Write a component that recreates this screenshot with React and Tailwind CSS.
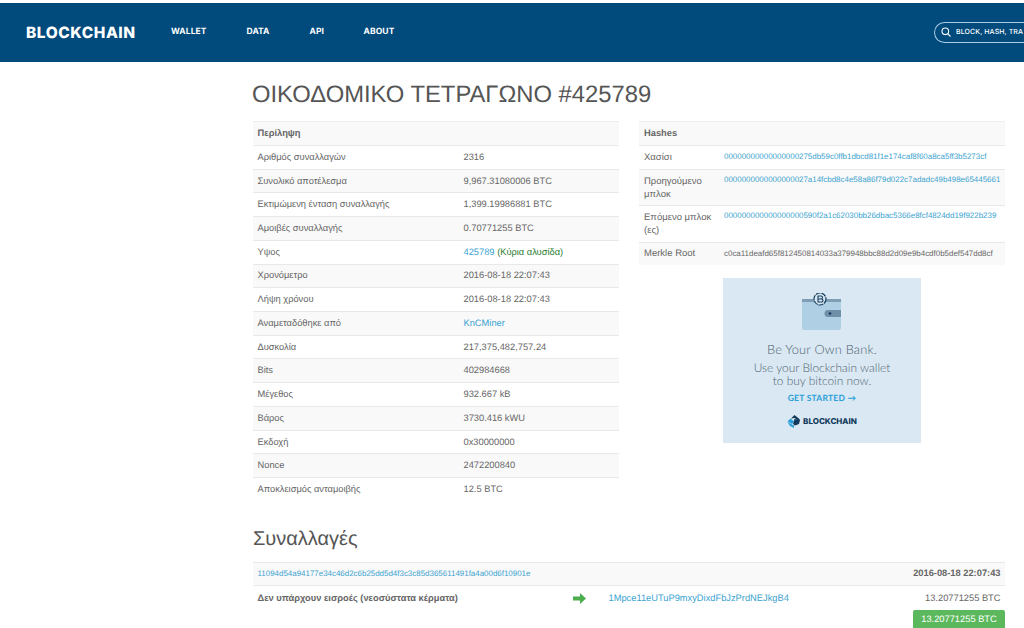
const rows = [
  ["Αριθμός συναλλαγών", "2316"],
  ["Συνολικό αποτέλεσμα", "9,967.31080006 BTC"],
  ["Εκτιμώμενη ένταση συναλλαγής", "1,399.19986881 BTC"],
  ["Αμοιβές συναλλαγής", "0.70771255 BTC"],
  ["Υψος", <><a className="text-[#3ba3d0]">425789</a> <span className="text-[#2d7d32]">(Κύρια αλυσίδα)</span></>],
  ["Χρονόμετρο", "2016-08-18 22:07:43"],
  ["Λήψη χρόνου", "2016-08-18 22:07:43"],
  ["Αναμεταδόθηκε από", <a className="text-[#3ba3d0]">KnCMiner</a>],
  ["Δυσκολία", "217,375,482,757.24"],
  ["Bits", "402984668"],
  ["Μέγεθος", "932.667 kB"],
  ["Βάρος", "3730.416 kWU"],
  ["Εκδοχή", "0x30000000"],
  ["Nonce", "2472200840"],
  ["Αποκλεισμός ανταμοιβής", "12.5 BTC"],
];

const hashes = [
  ["Χασίσι", "00000000000000000275db59c0ffb1dbcd81f1e174caf8f60a8ca5ff3b5273cf", true, false],
  ["Προηγούμενο μπλοκ", "0000000000000000027a14fcbd8c4e58a86f79d022c7adadc49b498e65445661", true, true],
  ["Επόμενο μπλοκ (ες)", "000000000000000000590f2a1c62030bb26dbac5366e8fcf4824dd19f922b239", true, true],
  ["Merkle Root", "c0ca11deafd65f812450814033a379948bbc88d2d09e9b4cdf0b5def547dd8cf", false, false],
];

function Wallet() {
  return (
    <svg width="44" height="38" viewBox="0 0 44 38">
      <rect x="2" y="6" width="39" height="31" rx="2" fill="#afcfe4" />
      <rect x="2" y="6" width="39" height="3" fill="#7f9db5" />
      <path d="M28 17h13v7H28a3.500 3.500 0 0 1 0-7z" fill="#6f8ea8" />
      <circle cx="30" cy="20.500" r="1.300" fill="#123a5c" />
      <circle cx="20" cy="6" r="6" fill="#d8e8f2" stroke="#123a5c" strokeWidth="1.200" strokeDasharray="5 0.800" />
      <path d="M18 3h3a1.500 1.500 0 0 1 0 3h-3zm0 3h3.500a1.500 1.500 0 0 1 0 3H18z" fill="none" stroke="#123a5c" strokeWidth="1.100" />
    </svg>
  );
}

function Logo() {
  return (
    <svg width="14" height="13" viewBox="0 0 14 13">
      <path d="M7.500 0L13 4.500 11 5.500 7.500 3 4 3.500z" fill="#123a5c" />
      <path d="M3.500 3.500L7 6.500 5 9 .500 6.500z" fill="#2a9fd8" />
      <path d="M7.500 4l5.500 1-1 4-4 1.500-2-1.500z" fill="#123a5c" />
      <path d="M.500 7L5 9.500l2 1V13L3 11z" fill="#2a9fd8" />
    </svg>
  );
}

export default function App() {
  return (
    <div className="h-[628px] w-[1024px] overflow-hidden bg-white font-['Liberation_Sans',Arial,sans-serif] text-[#666] [text-rendering:geometricPrecision]">
      <header className="mt-[2.500px] flex h-[59.500px] items-center bg-[#004a7c] pl-[26px]">
        <div className="w-[145px] font-['Inter',sans-serif] text-[15.500px] font-extrabold tracking-[0.55px] text-white">BLOCKCHAIN</div>
        <nav className="flex font-['Inter',sans-serif] text-[8.500px] font-bold tracking-[0.1px] text-white">
          <span className="w-[75.500px]">WALLET</span>
          <span className="w-[63px]">DATA</span>
          <span className="w-[54px]">API</span>
          <span>ABOUT</span>
        </nav>
        <div className="ml-auto flex h-[21px] w-[90px] items-center self-center rounded-l-full border border-r-0 border-[#a8cce4] pl-[6px] font-['Inter',sans-serif] text-[7px] font-medium tracking-[0.1px] whitespace-nowrap text-white">
          <svg width="10" height="10" viewBox="0 0 10 10" fill="none" stroke="#ffffff" strokeWidth="1.100" className="mr-[5px] shrink-0">
            <circle cx="4.300" cy="4.300" r="3.300" />
            <path d="M6.800 6.800L9.500 9.500" />
          </svg>
          BLOCK, HASH, TRA
        </div>
      </header>

      <main className="ml-[253px] w-[752px]">
        <h1 className="mt-[18px] -ml-[1px] h-[41px] text-[23.800px] leading-[29px] font-normal text-[#555] whitespace-nowrap">ΟΙΚΟΔΟΜΙΚΟ ΤΕΤΡΑΓΩΝΟ #425789</h1>

        <div className="flex h-[381px] justify-between">
          <section className="w-[366px] text-[9.300px]">
            <div className="flex h-[24px] items-center border-t border-[#eeeeee] bg-[#f9f9f9] pl-[4.500px] font-bold">Περίληψη</div>
            {rows.map(([k, v], i) => (
              <div key={k} className={`flex h-[23.720px] items-center border-t border-[#e8e8e8] pt-[1px] pl-[4.500px] ${i % 2 === 1 ? "bg-[#f9f9f9]" : "bg-white"}`}>
                <div className="w-[206px]">{k}</div>
                <div>{v}</div>
              </div>
            ))}
          </section>

          <section className="w-[366px]">
            <div className="flex h-[24px] items-center border-t border-[#eeeeee] bg-[#f9f9f9] pl-[5px] text-[9.300px] font-bold">Hashes</div>
            {hashes.map(([k, v, link, tall], i) => (
              <div key={k} className={`flex border-t border-[#e8e8e8] pl-[5px] ${tall ? "h-[36.500px] pt-[5px]" : "h-[23.500px] items-center"} ${i % 2 === 1 ? "bg-[#f9f9f9]" : ""}`}>
                <div className="w-[80px] shrink-0 pr-[6px] text-[9.500px] leading-[13px]">{k}</div>
                <div className={`text-[7.950px] leading-[10px] whitespace-nowrap ${link ? "text-[#3ba3d0]" : "text-[#666]"}`}>{v}</div>
              </div>
            ))}
            <div className="mt-[13px] ml-[84px] flex h-[165px] w-[198px] flex-col items-center bg-[#d9e8f2] font-['Lato',sans-serif] text-[#4f6473]">
              <div className="mt-[15px] h-[40px]"><Wallet /></div>
              <div className="mt-[8px] text-[12.800px] leading-[16px] font-light tracking-[0.2px]">Be Your Own Bank.</div>
              <div className="mt-[4px] text-center text-[11.900px] leading-[13px] font-light">Use your Blockchain wallet<br />to buy bitcoin now.</div>
              <div className="mt-[5px] text-[8.500px] font-bold tracking-[0.25px] text-[#2a9fd8]">GET STARTED →</div>
              <div className="mt-[10px] flex items-center gap-[2px] font-['Inter',sans-serif] text-[8px] font-extrabold text-[#123a5c]"><Logo />BLOCKCHAIN</div>
            </div>
          </section>
        </div>

        <h2 className="mt-[23px] h-[37px] text-[20px] leading-[29px] font-normal text-[#555]">Συναλλαγές</h2>
        <div className="flex h-[24px] items-center justify-between border-y border-[#e8e8e8] bg-[#f9f9f9] px-[4.500px]">
          <a className="text-[7.950px] text-[#3ba3d0]">11094d54a94177e34c46d2c6b25dd5d4f3c3c85d365611491fa4a00d6f10901e</a>
          <span className="text-[9.300px] font-bold">2016-08-18 22:07:43</span>
        </div>
        <div className="flex h-[24px] items-center px-[4.500px] pt-[1px] text-[9.300px]">
          <b className="w-[315px]">Δεν υπάρχουν εισροές (νεοσύστατα κέρματα)</b>
          <svg width="13" height="11" viewBox="0 0 13 11" className="shrink-0"><path d="M0 3.500h7V0l6 5.500L7 11V7.500H0z" fill="#4cae4c" /></svg>
          <a className="ml-[23px] text-[#3ba3d0]">1Mpce11eUTuP9mxyDixdFbJzPrdNEJkgB4</a>
          <span className="ml-auto">13.20771255 BTC</span>
        </div>
        <div className="flex justify-end">
          <div className="flex h-[20px] w-[92px] items-center justify-center rounded-t-[2px] bg-[#5cb85c] text-[9.300px] text-white">13.20771255 BTC</div>
        </div>
      </main>
    </div>
  );
}
